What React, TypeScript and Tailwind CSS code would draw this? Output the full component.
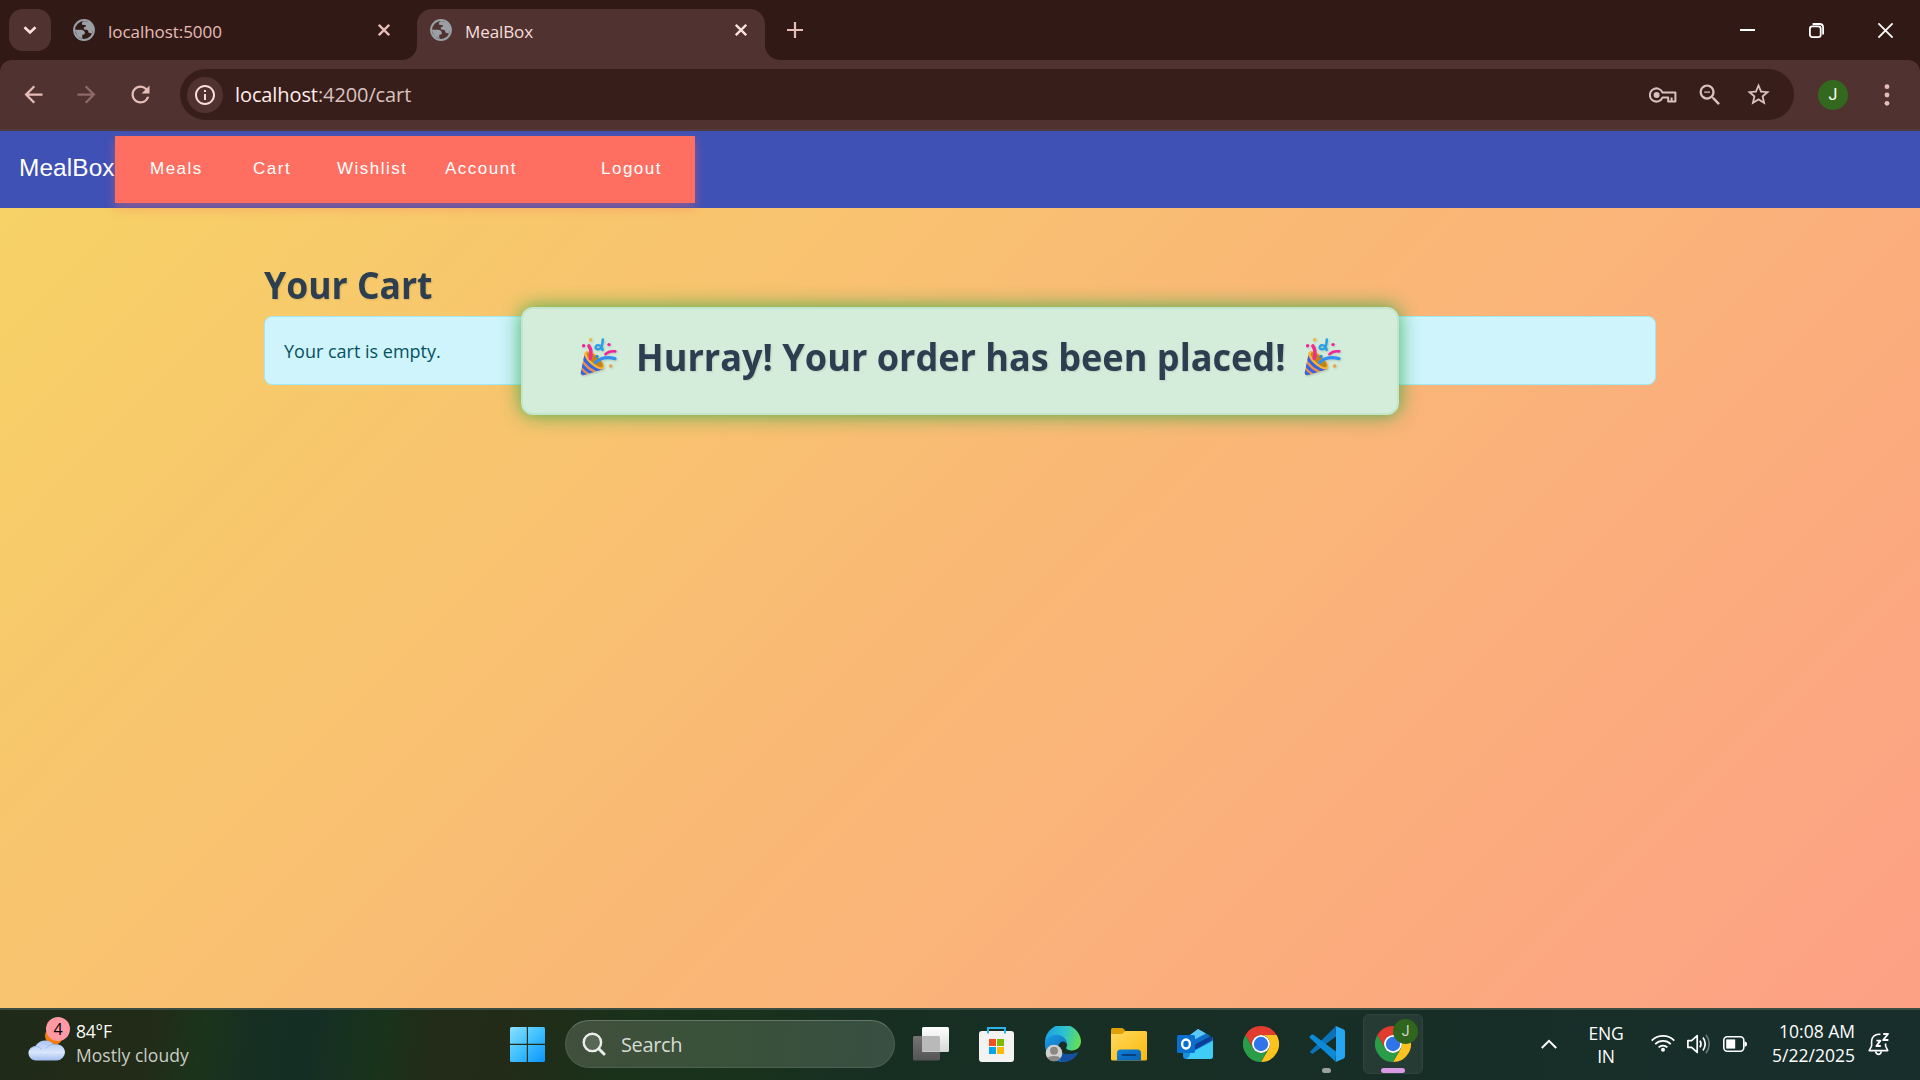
import type { ReactNode } from "react";
import { MdArrowBack, MdArrowForward, MdInfoOutline, MdRefresh, MdStarBorder, MdZoomOut } from "react-icons/md";

const ui = "font-['Open_Sans','Noto_Sans',sans-serif]";

function Globe() {
  return (
    <svg className="size-[22px] shrink-0" viewBox="0 0 22 22" fill="#9aa0a6">
      <circle cx="11" cy="11" r="9.9" fill="none" stroke="#9aa0a6" strokeWidth="2" />
      <path d="M11 2 Q8.6 3 8.8 5 Q9.2 6.4 11.4 6 Q13.4 5.8 13 7.4 Q10.8 7.6 10.6 9.2 Q10.8 11 13.6 10.8 Q15.6 11 15.4 13.6 Q17 14.6 19.2 14.4 L20.5 9 L17 3.4Z" />
      <path d="M1.6 10.8 H8 Q11.6 11 12 14.2 Q11.6 15.8 9.4 15.8 Q8.6 17.6 9.8 20 L4.6 17.6Z" />
    </svg>
  );
}

function Cross({ color }: { color: string }) {
  return (
    <svg className="size-3 shrink-0" viewBox="0 0 12 12" stroke={color} strokeWidth="2.3">
      <path d="M.8 .8 L11.2 11.2 M11.2 .8 L.8 11.2" />
    </svg>
  );
}

function TabStrip() {
  return (
    <div className="flex h-[60px] bg-[#311a16] pt-[9px]">
      <div className="ml-[9px] flex size-[42px] shrink-0 items-center justify-center rounded-[14px] bg-[#503330]">
        <svg className="size-[14px]" viewBox="0 0 14 14" fill="none" stroke="#fbe3e0" strokeWidth="2.6">
          <path d="M1.5 4.2 L7 9.4 L12.5 4.2" />
        </svg>
      </div>
      <div className="ml-[22px] flex h-[42px] w-[328px] shrink-0 items-center pr-[11px]">
        <Globe />
        <span className="ml-[13px] mt-[2px] flex-1 text-[17px] leading-none tracking-[-0.05px] text-[#e7bdb8]">localhost:5000</span>
        <Cross color="#e7bdb8" />
      </div>
      <div className="h-[51px] w-[16px] shrink-0 bg-[#503330]">
        <div className="h-full rounded-br-[15px] bg-[#311a16]" />
      </div>
      <div className="h-[51px] w-[348px] shrink-0 rounded-t-[15px] bg-[#503330] pl-[13px] pr-[18px]">
        <div className="flex h-[42px] items-center">
          <Globe />
          <span className="ml-[13px] mt-[2px] flex-1 text-[17px] leading-none tracking-[-0.1px] text-[#f8dedb]">MealBox</span>
          <Cross color="#fbe3e0" />
        </div>
      </div>
      <div className="h-[51px] w-[16px] shrink-0 bg-[#503330]">
        <div className="h-full rounded-bl-[15px] bg-[#311a16]" />
      </div>
      <svg className="ml-[6px] mt-[13px] size-4 shrink-0" viewBox="0 0 16 16" stroke="#e7bdb8" strokeWidth="2.2">
        <path d="M8 0 V16 M0 8 H16" />
      </svg>
      <div className="ml-auto mr-[27px] flex h-[42px] items-center gap-[54px]">
        <svg className="size-[15px]" viewBox="0 0 15 15" stroke="#fff" strokeWidth="2">
          <path d="M0 7 H15" />
        </svg>
        <svg className="size-[15px]" viewBox="0 0 15 15" fill="none" stroke="#fff" strokeWidth="1.8">
          <rect x=".9" y="3.3" width="10.8" height="10.8" rx="2.4" />
          <path d="M3.6 1 H10.6 Q14.1 1 14.1 4.5 V11.4" />
        </svg>
        <svg className="size-[15px]" viewBox="0 0 15 15" stroke="#fff" strokeWidth="1.8">
          <path d="M.4 .4 L14.6 14.6 M14.6 .4 L.4 14.6" />
        </svg>
      </div>
    </div>
  );
}

function Toolbar() {
  return (
    <div className="bg-[#311a16]">
      <div className="flex h-[71px] items-center rounded-t-[12px] border-b-2 border-[#513b39] bg-[#503330] pl-5">
        <MdArrowBack className="size-[27px] shrink-0 text-[#e7bdb8]" />
        <MdArrowForward className="ml-[26px] size-[27px] shrink-0 text-[#8d6a67]" />
        <MdRefresh className="ml-[27px] size-[27px] shrink-0 text-[#e7bdb8]" />
        <div className="ml-[26px] flex h-[51px] w-[1614px] shrink-0 items-center rounded-full bg-[#381e1b] pl-[7px] pr-[22px]">
          <div className="flex size-9 shrink-0 items-center justify-center rounded-full bg-[#503330]">
            <MdInfoOutline className="size-6 text-[#f8dedb]" />
          </div>
          <span className="ml-[12px] text-[20px] leading-none tracking-[-0.1px] text-[#d8c2bf]">
            <span className="text-[#ffedea]">localhost</span>:4200/cart
          </span>
          <svg className="ml-auto h-4 w-7" viewBox="0 0 28 16" fill="none" stroke="#d8c2bf" strokeWidth="2">
            <path d="M13.6 5.6 A6.6 6.6 0 1 0 13.6 10.4 H19.2 V14.6 H26.4 V5.6Z M22.6 14.6 V10.5" strokeLinejoin="round" />
            <circle cx="7.6" cy="8" r="3" fill="#d8c2bf" stroke="none" />
          </svg>
          <MdZoomOut className="ml-[19px] size-[28px] text-[#d8c2bf]" />
          <MdStarBorder className="ml-[21px] size-[27px] text-[#d8c2bf]" />
        </div>
        <div className="ml-6 flex size-[30px] items-center justify-center rounded-full bg-[#33691e] font-['Roboto',sans-serif] text-[16px] text-white">J</div>
        <svg className="ml-[36px] h-6 w-[6px]" viewBox="0 0 6 24" fill="#e7bdb8">
          <circle cx="3" cy="3.7" r="2.4" />
          <circle cx="3" cy="12" r="2.4" />
          <circle cx="3" cy="20.3" r="2.4" />
        </svg>
      </div>
    </div>
  );
}

function NavBar() {
  return (
    <header className="flex h-[77px] items-center bg-[#3f51b5] pl-[19px] font-['Liberation_Sans',sans-serif] text-white">
      <div className="w-24 pb-[2px] text-[24.4px] leading-none tracking-[0.1px]">MealBox</div>
      <nav className="z-10 flex h-[67px] w-[580px] items-center bg-[#ff6f61] pb-[2px] pl-[35px] text-[17px] tracking-[1.5px] shadow-[0_5px_10px_rgba(255,111,97,0.4)]">
        <a className="w-[103px]">Meals</a>
        <a className="w-[84px]">Cart</a>
        <a className="w-[108px]">Wishlist</a>
        <a className="w-[156px]">Account</a>
        <a>Logout</a>
      </nav>
    </header>
  );
}

function Popper() {
  return (
    <svg className="h-[38px] w-[37px] shrink-0 drop-shadow-[1px_1px_1px_rgba(0,0,0,0.15)]" viewBox="0 0 37 38" fill="none" strokeLinecap="round">
      <defs>
        <clipPath id="cone">
          <path d="M5 14 L.8 34.5 Q.4 38 4 37 L24 31 Z" />
        </clipPath>
      </defs>
      <path d="M5 14 L.8 34.5 Q.4 38 4 37 L24 31 Z" fill="#f09048" />
      <g clipPath="url(#cone)" stroke="#3565e0" strokeWidth="3.2">
        <path d="M2 17 Q8 30 24 34" />
        <path d="M0 24 Q5 33 16 37" />
        <path d="M-1 31 Q2 36 8 39" />
      </g>
      <ellipse cx="14.3" cy="22.2" rx="12.3" ry="5.2" transform="rotate(42 14.3 22.2)" fill="#f6b73c" />
      <ellipse cx="14.9" cy="21.8" rx="10.4" ry="3.7" transform="rotate(42 14.9 21.8)" fill="#c28419" />
      <path d="M10.2 20.5 Q12.4 13 8.8 7.8" stroke="#f5288e" strokeWidth="3.4" />
      <path d="M15.5 24.5 Q23 17.5 35 20.6" stroke="#3390f0" strokeWidth="3.2" />
      <path d="M25.5 16.2 Q29 12.4 35.3 13.4" stroke="#ee249b" strokeWidth="2.6" />
      <path d="M22.8 1.4 Q22.8 6 21 10 Q16.4 12.8 15.6 9.8 Q16 6 20 7.6 Q22 9 22.6 12" stroke="#2b9fe6" strokeWidth="2.5" />
      <circle cx="10.6" cy="1.7" r="1.7" fill="#f0b840" />
      <circle cx="3.6" cy="7.8" r="1.7" fill="#ee249b" />
      <circle cx="29" cy="6.6" r="1.7" fill="#ee249b" />
      <circle cx="17" cy="18.5" r="1.7" fill="#2f90e0" />
      <circle cx="30.6" cy="28" r="1.8" fill="#f0a04a" />
    </svg>
  );
}

function Page() {
  return (
    <main className="relative flex h-[877px] flex-col bg-[linear-gradient(135deg,#f6d365_0%,#fda085_100%)]">
      <NavBar />
      <section className="mx-[264px] mt-[57px]">
        <h2 className="h-[38px] origin-left scale-x-[0.935] text-[38px] font-bold leading-[38px] text-[#2c3e50] [text-shadow:1px_1px_2px_rgba(0,0,0,0.12)]">Your Cart</h2>
        <div className="mt-[13px] flex h-[69px] items-center rounded-[8px] border border-[#9eeaf9] bg-[#cff4fc] pl-[19px] pt-[2px] text-[18px] text-[#055160]">
          Your cart is empty.
        </div>
      </section>
      <div className="absolute left-[521px] top-[176px] flex h-[108px] w-[878px] items-center justify-center rounded-[12px] border-2 border-[#c3e6cb] bg-[#d4edda] pb-[9px] shadow-[0_0_20px_rgba(40,167,69,0.85)]">
        <Popper />
        <h2 className="ml-[19px] mr-[18px] flex w-[650px] justify-center pb-[2px] text-[38px] font-bold leading-[38px] text-[#2c3e50] [text-shadow:1px_1px_2px_rgba(0,0,0,0.12)]">
          <span className="scale-x-[0.95] whitespace-nowrap">Hurray! Your order has been placed!</span>
        </h2>
        <Popper />
      </div>
    </main>
  );
}

function Weather() {
  return (
    <div className="flex w-[510px] shrink-0 items-center pl-[29px]">
      <div className="relative mt-[-8px] h-[46px] w-[42px]">
        <svg className="absolute left-[-1px] top-[20px] h-[24px] w-[38px] overflow-visible" viewBox="0 0 38 24">
          <defs>
            <linearGradient id="cloud" x1="0" y1="0" x2="0" y2="1">
              <stop offset="0" stopColor="#a9c4f5" />
              <stop offset=".6" stopColor="#d9e6fb" />
              <stop offset="1" stopColor="#a3bdee" />
            </linearGradient>
          </defs>
          <circle cx="26" cy="-1" r="9" fill="#f57c0a" />
          <path d="M8 23.5 A7.2 7.2 0 0 1 7.4 9 A11 11 0 0 1 25.6 7.6 A8.8 8.8 0 0 1 37 15 A8.5 8.5 0 0 1 29 23.5Z" fill="url(#cloud)" />
          <path d="M2.5 12 Q8 6.5 14 12.5 M18 11.5 Q21 7 27 7.2" stroke="#8fb0ec" strokeWidth="1" fill="none" opacity=".7" />
        </svg>
        <div className="absolute left-[17px] top-0 flex size-6 items-center justify-center rounded-full bg-[#ff99a4] text-[16px] leading-none text-black">4</div>
      </div>
      <div className="ml-[5px] mt-[-2px] text-[17.5px] leading-6">
        <div className="tracking-[-0.2px] text-white">84°F</div>
        <div className="tracking-[0.05px] text-[#c9cdc6]">Mostly cloudy</div>
      </div>
    </div>
  );
}

function Chrome() {
  return (
    <svg className="size-9" viewBox="0 0 48 48">
      <path fill="#e33b2e" d="M24,12H44.7812a23.9939,23.9939,0,0,0-41.5639.0029L13.6079,30l.0093-.0024A11.9852,11.9852,0,0,1,24,12Z" />
      <path fill="#fcc31e" d="M34.3913,30.0029,24.0007,48A23.994,23.994,0,0,0,44.78,12.0031H23.9989l-.0025.0093A11.985,11.985,0,0,1,34.3913,30.0029Z" />
      <path fill="#2a9d48" d="M13.6086,30.0031,3.218,12.006A23.994,23.994,0,0,0,24.0025,48L34.3931,30.0029l-.0067-.0068a11.9852,11.9852,0,0,1-20.7778.007Z" />
      <circle cx="24" cy="24" r="12" fill="#fff" />
      <circle cx="24" cy="24" r="9.6" fill="#2f74e8" />
    </svg>
  );
}

function Windows() {
  return (
    <svg className="size-[35px] shrink-0" viewBox="0 0 35 35">
      <defs>
        <linearGradient id="win" x1="0" y1="0" x2="1" y2="1">
          <stop offset="0" stopColor="#8be0ff" />
          <stop offset=".45" stopColor="#45c4ff" />
          <stop offset="1" stopColor="#0a94fa" />
        </linearGradient>
      </defs>
      <path fill="url(#win)" d="M1.5 0 H16.8 V16.8 H0 V1.5 Q0 0 1.5 0Z M18 0 H33.5 Q35 0 35 1.5 V16.8 H18Z M0 18 H16.8 V35 H1.5 Q0 35 0 33.5Z M18 18 H35 V33.5 Q35 35 33.5 35 H18Z" />
    </svg>
  );
}

function TaskView() {
  return (
    <svg className="size-9" viewBox="0 0 36 36">
      <defs>
        <linearGradient id="tv1" x1="0" y1="0" x2="0" y2="1"><stop offset="0" stopColor="#fff" /><stop offset="1" stopColor="#d8d8d8" /></linearGradient>
        <linearGradient id="tv2" x1="0" y1="0" x2="0" y2="1"><stop offset="0" stopColor="#747474" /><stop offset="1" stopColor="#555" /></linearGradient>
      </defs>
      <rect x="0" y="10" width="27" height="24.5" rx="1.5" fill="url(#tv2)" />
      <rect x="9" y="1" width="27" height="25" rx="1.5" fill="url(#tv1)" />
      <path d="M9 10 H25.5 Q27 10 27 11.5 V25.5 H10.5 Q9 25.5 9 24Z" fill="#b9b9b9" />
    </svg>
  );
}

function Store() {
  return (
    <svg className="size-9" viewBox="0 0 36 36">
      <rect x="0" y="5" width="35" height="31" rx="3" fill="#f3f3f3" />
      <path d="M9 7.5 V2 H26 V7.5" fill="none" stroke="#29b4ea" strokeWidth="2" />
      <path fill="#f25022" d="M10 13 h7 v7 h-7z" />
      <path fill="#7fba00" d="M18 13 h7 v7 h-7z" />
      <path fill="#00a4ef" d="M10 21 h7 v7 h-7z" />
      <path fill="#ffb900" d="M18 21 h7 v7 h-7z" />
    </svg>
  );
}

function Edge() {
  return (
    <svg className="size-9" viewBox="0 0 36 36">
      <defs>
        <linearGradient id="e1" x1="0" y1=".4" x2="1" y2=".6"><stop offset="0" stopColor="#1d9fe0" /><stop offset=".5" stopColor="#2cc3cf" /><stop offset="1" stopColor="#66e04e" /></linearGradient>
        <linearGradient id="e2" x1="0" y1="0" x2="1" y2="1"><stop offset="0" stopColor="#1a9be4" /><stop offset="1" stopColor="#0c59a4" /></linearGradient>
      </defs>
      <path d="M0 18 A18 18 0 0 1 36 15 C36 21 31.5 25 26 24.5 C21 24 20.5 22.5 22 20 C23 17 20 13 15 13 C8 13 2 17 0 18Z" fill="url(#e1)" />
      <path d="M0 19 C0 12 6 8.8 12 8.8 C18 9 22.5 14 22 19 C20 13.8 14.4 14.8 13.5 20 C13 27 20 31 33 26.5 C30 32.5 24.5 36 18 36 C8 36 0 28.5 0 19Z" fill="url(#e2)" />
      <path d="M13.5 20 C13 27 20 31 33 26.5 C30 32.5 24.5 36 18 36 C13 33 11 25 13.5 20Z" fill="#1450a0" />
      <circle cx="9" cy="27" r="8.3" fill="#d2d0ce" />
      <circle cx="9" cy="24.8" r="4" fill="#8a8886" />
      <path d="M2.8 32.4 Q3.5 30 9 30 Q14.5 30 15.2 32.4 A8.3 8.3 0 0 1 2.8 32.4Z" fill="#8a8886" />
    </svg>
  );
}

function Explorer() {
  return (
    <svg className="size-9" viewBox="0 0 36 36">
      <defs>
        <linearGradient id="f1" x1="0" y1="0" x2="1" y2="1"><stop offset="0" stopColor="#ffd95e" /><stop offset="1" stopColor="#fbb80c" /></linearGradient>
        <linearGradient id="f2" x1="0" y1="0" x2="1" y2="1"><stop offset="0" stopColor="#0f7fd8" /><stop offset="1" stopColor="#0b62b4" /></linearGradient>
      </defs>
      <path d="M0 3.5 Q0 2 1.5 2 H11 Q12.5 2 14.5 5 V12 H0Z" fill="#dfa008" />
      <path d="M0 8 H11 L14.5 5 H34.5 Q36 5 36 6.5 V33 Q36 34.5 34.5 34.5 H1.5 Q0 34.5 0 33Z" fill="url(#f1)" />
      <path d="M6 34.5 V27 Q6 23.5 9.5 23.5 H26.5 Q30 23.5 30 27 V34.5Z" fill="url(#f2)" />
      <path d="M11.5 29 H24.5" stroke="#083f7d" strokeWidth="1.8" strokeLinecap="round" />
    </svg>
  );
}

function Outlook() {
  return (
    <svg className="size-9" viewBox="0 0 36 36">
      <path d="M6 14 L21 3 L36 12 V30 Q36 33 33 33 H9 Q6 33 6 30Z" fill="#1a8fe0" />
      <path d="M10 11.5 L21 3 L29 7.5 L14 18Z" fill="#5cc8f8" />
      <path d="M12 16.5 L29 7.5 L33 10 L17 20Z" fill="#0f6fc8" />
      <path d="M15 20 L33.5 10 Q36 11 35.5 14 L17 24.5Z" fill="#0b3f96" />
      <path d="M13 27 L36 15 V30 Q36 33 33 33 H9 Q13 31 13 27Z" fill="#3fcdf6" />
      <rect x="0" y="9" width="18" height="18" rx="1.5" fill="#0a6fcf" />
      <ellipse cx="9" cy="18" rx="3.9" ry="4.5" fill="none" stroke="#fff" strokeWidth="2.4" />
    </svg>
  );
}

function VsCode() {
  return (
    <svg className="size-9" viewBox="0 0 36 36">
      <path d="M.8 25.8 L26.5 .5 L27.2 10.2 L4.5 27.3 Q3.3 28 2.4 27.2 L.8 25.8Z" fill="#0a73b8" />
      <path d="M.8 10.2 L2.4 8.8 Q3.3 8 4.5 8.8 L27.2 25.8 L26.4 35.6 L.9 12 Q0 11 .8 10.2Z" fill="#0d8ad6" />
      <path d="M26 .4 Q27 0 28 .4 L34.8 3.6 Q36 4.3 36 5.4 V30.6 Q36 31.7 34.8 32.4 L28 35.6 Q27 36 26 35.3 Q27 35 27 33.5 V2.5 Q27 1 26 .4Z" fill="#26a5f2" />
    </svg>
  );
}

function Cell({ children }: { children: ReactNode }) {
  return <div className="relative flex h-[60px] w-[66px] shrink-0 items-center justify-center">{children}</div>;
}

function Tray() {
  return (
    <div className="ml-[115px] flex items-center text-[17.5px] leading-6 text-white">
      <svg className="h-[10px] w-4 shrink-0" viewBox="0 0 16 10" fill="none" stroke="#fff" strokeWidth="2">
        <path d="M.8 9 L8 1.8 L15.2 9" />
      </svg>
      <div className="ml-[31px] mt-[2px] w-9 text-center leading-[23px] tracking-[-0.2px]">
        <div>ENG</div>
        <div>IN</div>
      </div>
      <svg className="ml-[27px] mt-[-2px] h-[18px] w-6 shrink-0" viewBox="0 0 24 18" fill="none" stroke="#fff" strokeWidth="1.7">
        <path d="M.7 6.6 A16 16 0 0 1 23.3 6.6 M4.2 10.2 A11 11 0 0 1 19.8 10.2 M7.6 13.4 A6.2 6.2 0 0 1 16.4 13.4" />
        <circle cx="12" cy="15.8" r="2" fill="#fff" stroke="none" />
      </svg>
      <svg className="ml-3 h-5 w-6 shrink-0" viewBox="0 0 24 20" fill="none" stroke="#fff" strokeWidth="1.7" strokeLinejoin="round">
        <path d="M.9 6.6 H4.6 L10.2 1.6 V18.4 L4.6 13.4 H.9Z" />
        <path d="M13 6.6 Q15 10 13 13.4 M16 3.6 Q20.4 10 16 16.4" />
        <path d="M19 .8 Q25.4 10 19 19.2" opacity=".35" />
      </svg>
      <svg className="ml-3 h-4 w-6 shrink-0" viewBox="0 0 24 16" fill="none" stroke="#fff" strokeWidth="1.6">
        <rect x=".8" y=".8" width="20" height="14.4" rx="3.4" />
        <rect x="3.2" y="3.4" width="9" height="9.2" fill="#fff" stroke="none" />
        <path d="M21.5 5.4 Q24 5.4 24 8 Q24 10.6 21.5 10.6Z" fill="#fff" stroke="none" />
      </svg>
      <div className="ml-[20px] mt-[-2px] w-[88px] text-right">
        <div>10:08 AM</div>
        <div>5/22/2025</div>
      </div>
      <svg className="ml-[13px] h-[23px] w-[22px] shrink-0" viewBox="0 0 22 23" fill="none" stroke="#fff" strokeWidth="1.6" strokeLinejoin="round">
        <path d="M12.4 1.4 Q10 .8 7.6 2 Q3.6 4 3.6 8.6 V13 L1.2 17.6 H19.8 L17.6 13 V10.6" />
        <path d="M7.6 18.4 Q8.2 21.4 10.5 21.4 Q12.8 21.4 13.4 18.4" />
        <path d="M8.4 7.6 H12.4 L8.4 13 H12.8 M15.2 1 H20 L15.2 7 H20.4" strokeWidth="1.9" />
      </svg>
    </div>
  );
}

function Taskbar() {
  return (
    <footer className="flex h-[72px] items-center border-t-2 border-[#3c4c40] bg-[linear-gradient(100deg,#1f2a18_0px,#222b18_150px,#1b341b_205px,#162f22_250px,#152e25_310px,#18331b_375px,#222c18_430px,#222b18_500px,#1a311a_620px,#18321c_740px,#172f23_880px,#172e28_1500px,#182e2c_1920px)] pb-[2px]">
      <Weather />
      <Windows />
      <div className="ml-5 flex h-12 w-[330px] shrink-0 items-center rounded-full border border-t-[1.5px] border-[#4c6150] border-t-[#667568] bg-[linear-gradient(100deg,#414f3c,#3a5239_45%,#384f42)] pl-[16px]">
        <svg className="size-6" viewBox="0 0 24 24" fill="none" stroke="#eceeec" strokeWidth="2.4">
          <circle cx="10.4" cy="10.4" r="8.7" fill="#ffffff22" />
          <path d="M16.8 16.8 L22 22" strokeWidth="3" strokeLinecap="round" />
        </svg>
        <span className="ml-[15px] mt-px text-[20px] leading-none tracking-[-0.35px] text-[#d6dbd6]">Search</span>
      </div>
      <div className="ml-[3px] flex">
        <Cell><TaskView /></Cell>
        <Cell><Store /></Cell>
        <Cell><Edge /></Cell>
        <Cell><Explorer /></Cell>
        <Cell><Outlook /></Cell>
        <Cell><Chrome /></Cell>
        <Cell>
          <VsCode />
          <div className="absolute bottom-px left-[28px] h-[5px] w-[9px] rounded-full bg-[#9aa19e]" />
        </Cell>
        <Cell>
          <div className="flex size-[60px] items-center justify-center rounded-[6px] border border-[#31453f] bg-[#273b35]">
            <Chrome />
          </div>
          <div className="absolute left-[33px] top-[5px] flex size-[25px] items-center justify-center rounded-full bg-[#2f651d] font-['Roboto',sans-serif] text-[14px] text-[#cfd8cb]">J</div>
          <div className="absolute bottom-px left-[21px] h-[5px] w-6 rounded-full bg-[#d99be6]" />
        </Cell>
      </div>
      <Tray />
    </footer>
  );
}

export default function App() {
  return (
    <div className={`h-[1080px] w-[1920px] overflow-hidden ${ui}`}>
      <TabStrip />
      <Toolbar />
      <Page />
      <Taskbar />
    </div>
  );
}
